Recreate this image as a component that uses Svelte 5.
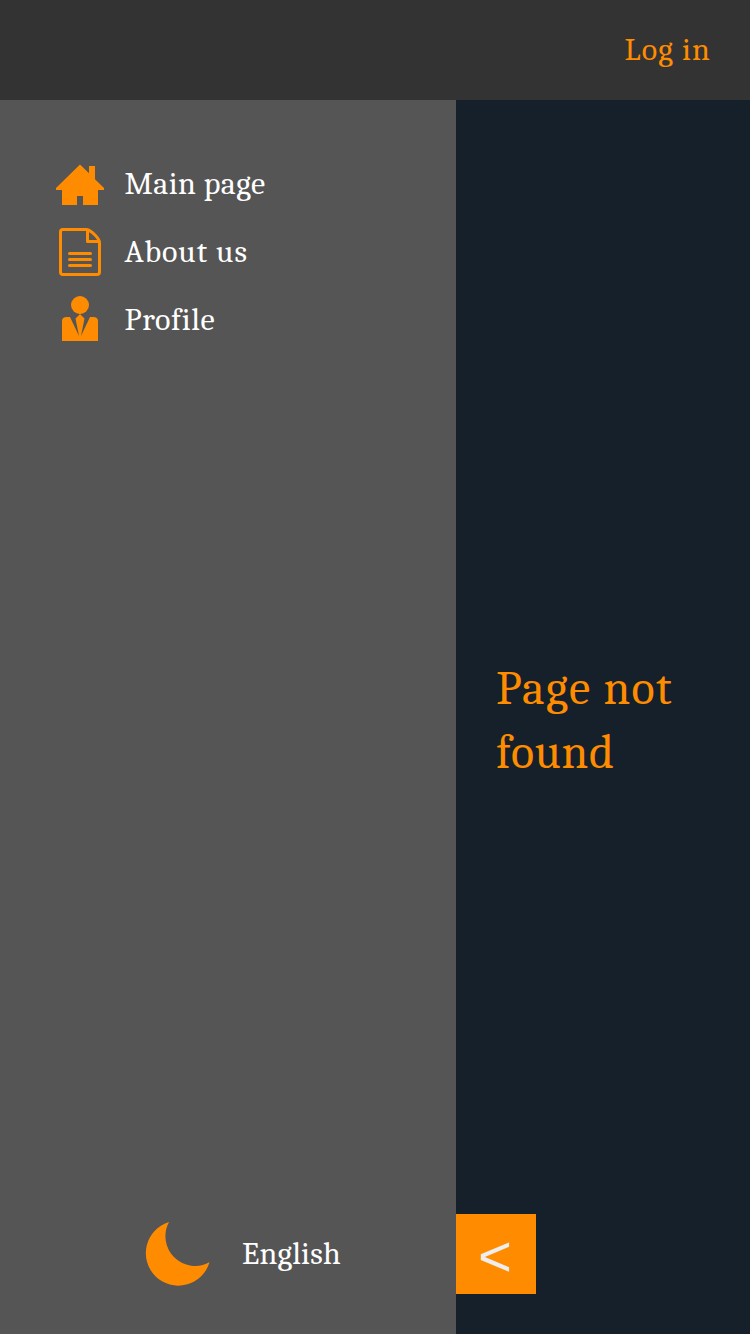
<script>
  const links = [
    { id: 'main', label: 'Main page' },
    { id: 'about', label: 'About us' },
    { id: 'profile', label: 'Profile' }
  ];
</script>

<div class="page">
  <header><span class="login">Log in</span></header>
  <div class="body">
    <aside>
      <nav>
        {#each links as link}
          <div class="item">
            <svg width="48" height="48" viewBox="0 0 48 48">
              {#if link.id === 'main'}
                <path d="M24 4.500L33 13.300V6H39V19.200L48 28V30H42V45H27V36H21V45H6V30H0V28Z" />
              {:else if link.id === 'about'}
                <path class="line" d="M7 1.500H30.500Q34 2 39 7Q43.500 11.500 43.500 15V44Q43.500 46.500 41 46.500H7Q4.500 46.500 4.500 44V4Q4.500 1.500 7 1.500ZM31.500 2V13.500H43.500M13.500 25.500H34.500M13.500 31.500H34.500M13.500 37.500H34.500" />
              {:else}
                <circle cx="24" cy="9" r="9" />
                <path d="M6 45V25Q6 21 11 21H14L23 40L19.500 22.500L24 18L28.500 22.500L25 40L34 21H37Q42 21 42 25V45Z" />
              {/if}
            </svg>
            <span class={link.id}>{link.label}</span>
          </div>
        {/each}
      </nav>
      <footer>
        <svg width="66" height="66" viewBox="0 0 66 66">
          <path d="M24 1A32.500 32.500 0 1 0 64.500 41.300A29.800 29.800 0 0 1 24 1Z" />
        </svg>
        <span>English</span>
      </footer>
    </aside>
    <main>
      <h1><span class="first">Page not</span><br /><span>found</span></h1>
      <button>&lt;</button>
    </main>
  </div>
</div>

<style>
  :global(body) { margin: 0; }
  .page {
    height: 1334px;
    display: flex;
    flex-direction: column;
    overflow: hidden;
    font: 32px/40px Cambria, Caladea, "Liberation Serif", serif;
    color: #fff;
  }
  header {
    box-sizing: border-box;
    height: 100px;
    padding: 30px 39px 0 0;
    background: #333;
    color: #ff8c00;
    text-align: right;
  }
  .login { letter-spacing: 1.1px; }
  .body { flex: 1; display: flex; }
  aside {
    width: 456px;
    background: #555;
    display: flex;
    flex-direction: column;
    justify-content: space-between;
  }
  nav {
    display: flex;
    flex-direction: column;
    gap: 20px;
    padding: 60px 0 0 56px;
  }
  .item { display: flex; align-items: center; gap: 20.5px; height: 48px; }
  svg { fill: #ff8c00; flex: none; }
  .line {
    fill: none;
    stroke: #ff8c00;
    stroke-width: 3;
    stroke-linecap: round;
    stroke-linejoin: round;
  }
  .main { letter-spacing: 0.4px; }
  .about { letter-spacing: 0.95px; }
  .profile { letter-spacing: 0.65px; }
  footer {
    display: flex;
    align-items: center;
    gap: 31px;
    padding: 0 0 47px 145px;
    letter-spacing: 0.2px;
  }
  main {
    flex: 1;
    background: #16202a;
    display: flex;
    flex-direction: column;
    justify-content: space-between;
    align-items: flex-start;
  }
  h1 {
    margin: 0;
    padding: 557px 0 0 40px;
    color: #ff8c00;
    font-weight: 400;
    font-size: 48px;
    line-height: 64px;
    letter-spacing: 0.6px;
    white-space: nowrap;
  }
  .first { letter-spacing: 1.4px; }
  button {
    width: 80px;
    height: 80px;
    margin: 0 0 40px;
    padding: 4px 2px 0 0;
    border: 0;
    background: #ff8c00;
    color: #eee;
    font: 58px/76px "Liberation Sans", sans-serif;
  }
</style>
